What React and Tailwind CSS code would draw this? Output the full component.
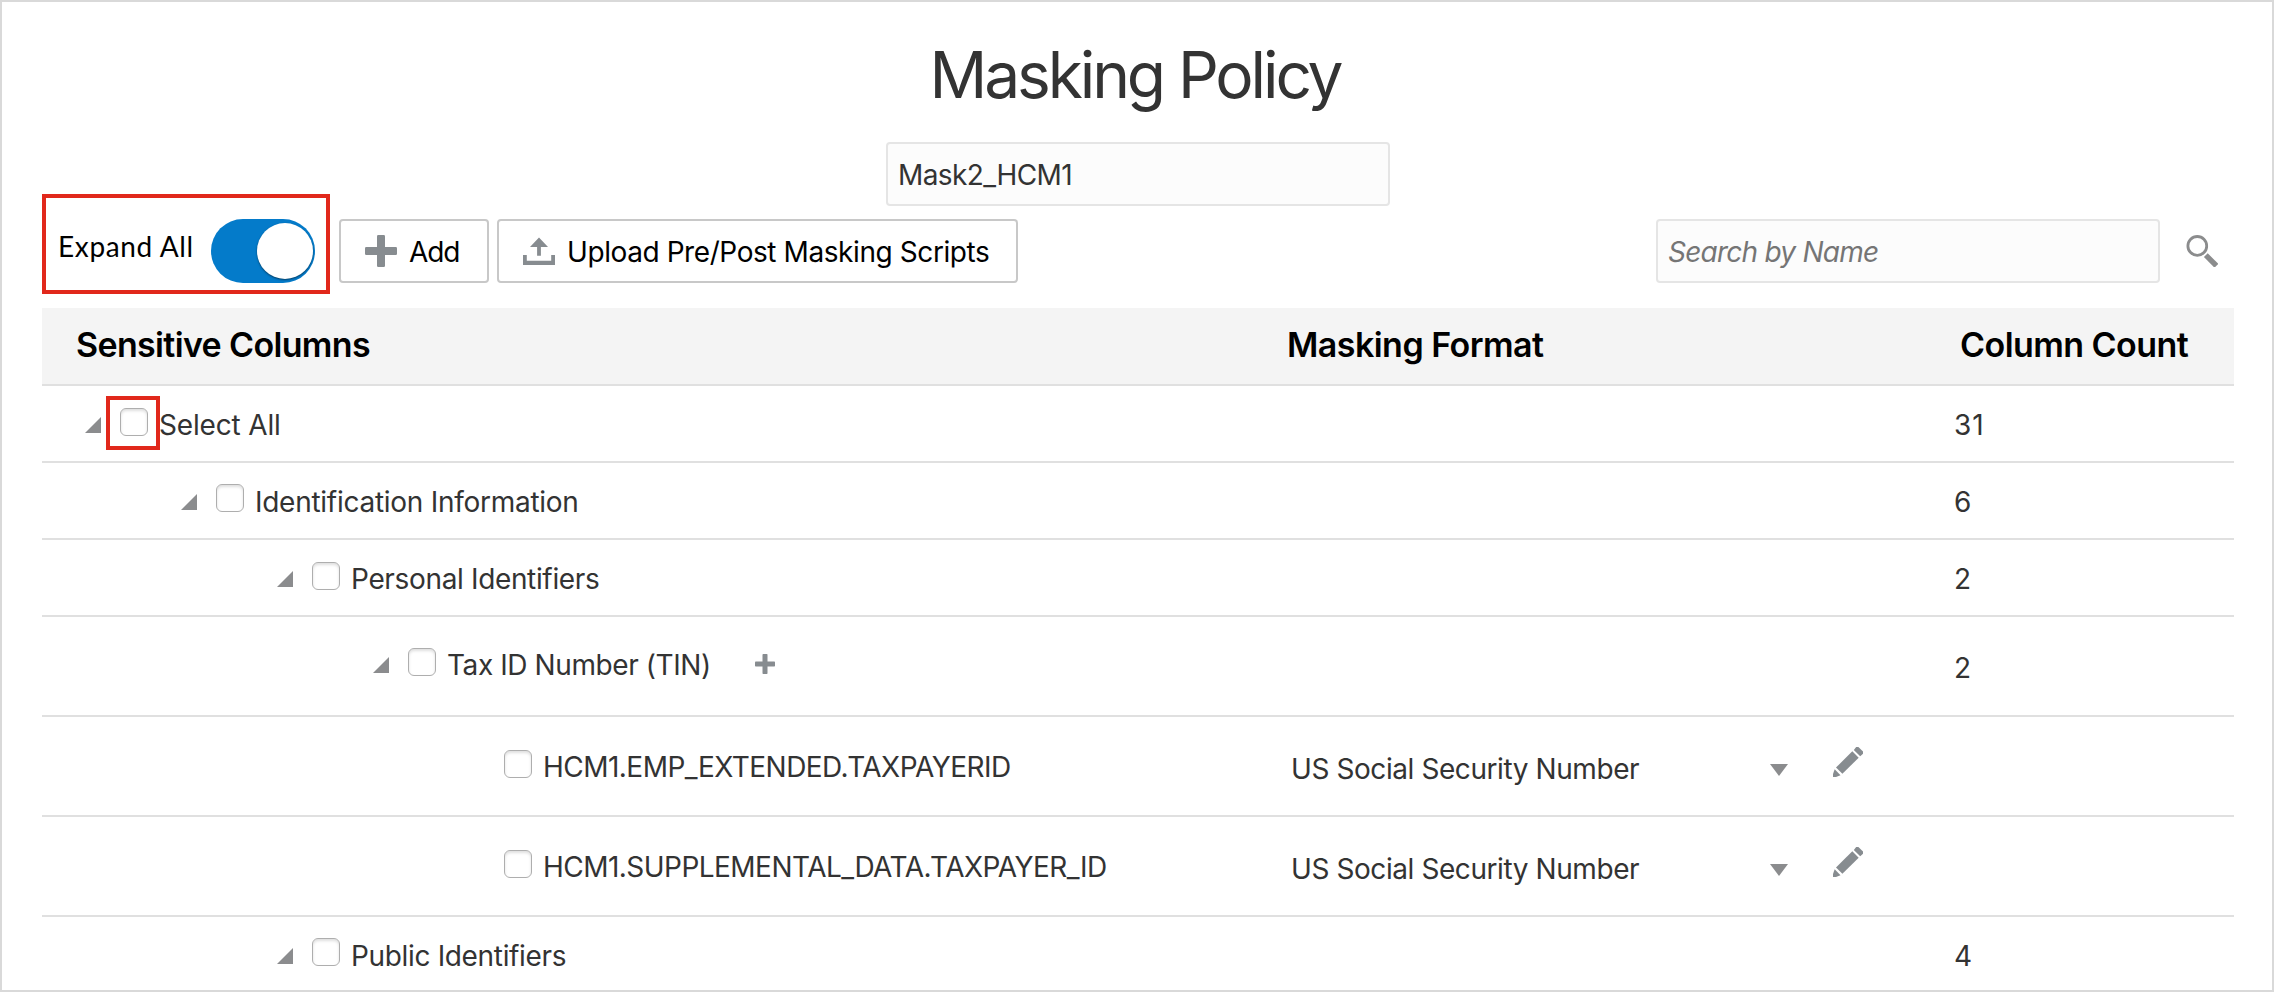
const INDENT = ['pl-[43px]', 'pl-[139px]', 'pl-[235px]', 'pl-[331px]', 'pl-[427px]'];

const ROWS = [
  { level: 0, label: 'Select All', track: 'tracking-[-0.169px]', count: '31', marked: true, h: 'h-[77px]', box: 'mt-[22px]', arrow: 'mt-[31px]', text: 'mt-[22px]', cnt: 'mt-[22px]' },
  { level: 1, label: 'Identification Information', track: 'tracking-[-0.27px]', count: '6', h: 'h-[77px]', box: 'mt-[21px]', arrow: 'mt-[31px]', text: 'mt-[22px]', cnt: 'mt-[22px]' },
  { level: 2, label: 'Personal Identifiers', track: 'tracking-[-0.346px]', count: '2', h: 'h-[77px]', box: 'mt-[22px]', arrow: 'mt-[31px]', text: 'mt-[22px]', cnt: 'mt-[22px]' },
  { level: 3, label: 'Tax ID Number (TIN)', track: 'tracking-[-0.415px]', count: '2', add: true, h: 'h-[100px]', box: 'mt-[31px]', arrow: 'mt-[40px]', text: 'mt-[31px]', cnt: 'mt-[34px]' },
  { level: 4, label: 'HCM1.EMP_EXTENDED.TAXPAYERID', track: 'tracking-[-0.53px]', leaf: true, format: 'US Social Security Number', h: 'h-[100px]', box: 'mt-[33px]', arrow: 'mt-[40px]', text: 'mt-[33px]', cnt: 'mt-[33px]' },
  { level: 4, label: 'HCM1.SUPPLEMENTAL_DATA.TAXPAYER_ID', track: 'tracking-[-0.535px]', leaf: true, format: 'US Social Security Number', h: 'h-[100px]', box: 'mt-[33px]', arrow: 'mt-[40px]', text: 'mt-[33px]', cnt: 'mt-[33px]' },
  { level: 2, label: 'Public Identifiers', track: 'tracking-[-0.34px]', count: '4', last: true, h: 'h-[73px]', box: 'mt-[21px]', arrow: 'mt-[31px]', text: 'mt-[22px]', cnt: 'mt-[22px]' },
];

function Plus({ className }) {
  return (
    <svg viewBox="0 0 32 32" className={className} fill="#878c90">
      <rect x="12" y="0" width="8" height="32" rx="1.2" />
      <rect x="0" y="12" width="32" height="8" rx="1.2" />
    </svg>
  );
}

function UploadIcon() {
  return (
    <svg viewBox="0 0 32 32" className="h-8 w-8 shrink-0" fill="#878c90">
      <path d="M16 2.5 L25 12 H17.9 V20.8 H14.1 V12 H7 Z" />
      <path d="M0 20 H3.8 V25.8 H28.2 V20 H32 V29.9 H0 Z" />
    </svg>
  );
}

function PencilIcon() {
  return (
    <svg viewBox="0 0 30 30" className="h-[30px] w-[30px]" fill="#878c90">
      <path d="M19.3 4.3 L25.7 10.7 L9.4 26.8 L3 20.6 Z" />
      <path d="M1.7 22.3 L7.5 28.2 L3 30 H0 V27 Z" />
      <path d="M20.8 2.9 L23.2 0 H25.4 L30 4.6 V6.8 L27.2 9.3 Z" />
    </svg>
  );
}

function SearchIcon() {
  return (
    <svg viewBox="0 0 32 32" className="h-8 w-8" fill="none" stroke="#8b8c8d">
      <circle cx="11.3" cy="10.9" r="9.4" strokeWidth="2.8" />
      <path d="M19.8 20.2 L30.4 30.8" strokeWidth="5.4" />
    </svg>
  );
}

function Row({ row }) {
  return (
    <div className={`grid grid-cols-[1245px_667px_1fr] ${row.h} ${row.last ? '' : 'border-b-2 border-[#e0e0e0]'}`}>
      <div className={`flex items-start ${INDENT[row.level]}`}>
        <svg viewBox="0 0 16 16" className={`h-4 w-4 shrink-0 ${row.arrow} ${row.leaf ? 'invisible' : ''}`} fill="#8b8c8e">
          <path d="M16 0 V16 H0 Z" />
        </svg>
        <div className={`relative ml-[19px] h-7 w-7 shrink-0 rounded-[6px] border border-[#aeaeae] bg-white shadow-[inset_0_2px_3px_rgba(0,0,0,0.13)] ${row.box}`}>
          {row.marked && <div className="absolute -top-[13px] -left-[15px] h-[54px] w-[54px] border-4 border-[#e1281b]" />}
        </div>
        <div className={`ml-[11px] whitespace-nowrap ${row.text} ${row.track}`}>{row.label}</div>
        {row.add && <Plus className="mt-[37px] ml-[44px] h-5 w-5" />}
      </div>
      <div className="flex items-start pl-1">
        {row.format && (
          <>
            <div className="mt-[35px] w-[479px] whitespace-nowrap tracking-[-0.42px]">{row.format}</div>
            <svg viewBox="0 0 18 12" className="mt-[47px] h-3 w-[18px]" fill="#8b8c8e">
              <path d="M0 0 H18 L9 12 Z" />
            </svg>
            <div className="mt-[30px] ml-[45px]"><PencilIcon /></div>
          </>
        )}
      </div>
      <div className={`tracking-[1px] ${row.cnt}`}>{row.count}</div>
    </div>
  );
}

export default function App() {
  return (
    <div className="flex h-[992px] w-[2274px] flex-col overflow-hidden border-2 border-[#d9d9d9] bg-white pr-[38px] pl-10 font-['Inter',sans-serif] text-[28px] leading-[34px] text-[#333333]">
      <h1 className="mt-[34px] h-[106px] pr-[6px] text-center text-[64px] leading-[77px] font-[370] tracking-[-3.1px]">Masking Policy</h1>
      <div className="ml-[844px] flex h-16 w-[504px] items-start rounded border-2 border-[#e5e5e5] bg-[#fcfcfc] pt-[14px] pl-[10px] tracking-[-0.58px]">Mask2_HCM1</div>

      <div className="mt-[13px] flex h-16 shrink-0 items-start text-black">
        <div className="relative flex w-[297px] items-start pl-4">
          <div className="mt-[10px] w-[153px] font-['Lato',sans-serif] tracking-[0.65px]">Expand All</div>
          <div className="flex h-16 w-[104px] items-center justify-end rounded-full bg-[#047bca] pr-[2px]">
            <div className="h-14 w-14 rounded-full bg-white shadow-[0_1px_2px_rgba(0,0,0,0.5)]" />
          </div>
          <div className="absolute -top-[25px] left-0 h-[100px] w-[288px] border-4 border-[#e1281b]" />
        </div>
        <button className="flex h-16 w-[150px] items-start rounded border-2 border-[#c8c8c8] pt-[14px] pl-6 tracking-[-1.1px]">
          <Plus className="h-8 w-8 shrink-0" />
          <span className="ml-3 block">Add</span>
        </button>
        <button className="ml-2 flex h-16 w-[521px] items-start rounded border-2 border-[#c8c8c8] pt-[14px] pl-6 tracking-[-0.419px]">
          <UploadIcon />
          <span className="ml-3 block whitespace-nowrap">Upload Pre/Post Masking Scripts</span>
        </button>
        <div className="ml-auto h-16 w-[504px] rounded border-2 border-[#e5e5e5] bg-[#fcfcfc] pt-[14px] pl-[10px] tracking-[-0.754px] text-[#757575] italic">Search by Name</div>
        <div className="mt-4 mr-4 ml-[26px]"><SearchIcon /></div>
      </div>

      <div className="mt-[25px] grid h-[78px] shrink-0 grid-cols-[1245px_673px_1fr] border-b-2 border-[#e0e0e0] bg-[#f4f4f4] pt-4 text-[34px] leading-[41px] font-semibold text-black">
        <div className="pl-[34px] tracking-[-0.65px]">Sensitive Columns</div>
        <div className="tracking-[-0.539px]">Masking Format</div>
        <div className="tracking-[-0.56px]">Column Count</div>
      </div>
      {ROWS.map((row, i) => <Row key={i} row={row} />)}
    </div>
  );
}
